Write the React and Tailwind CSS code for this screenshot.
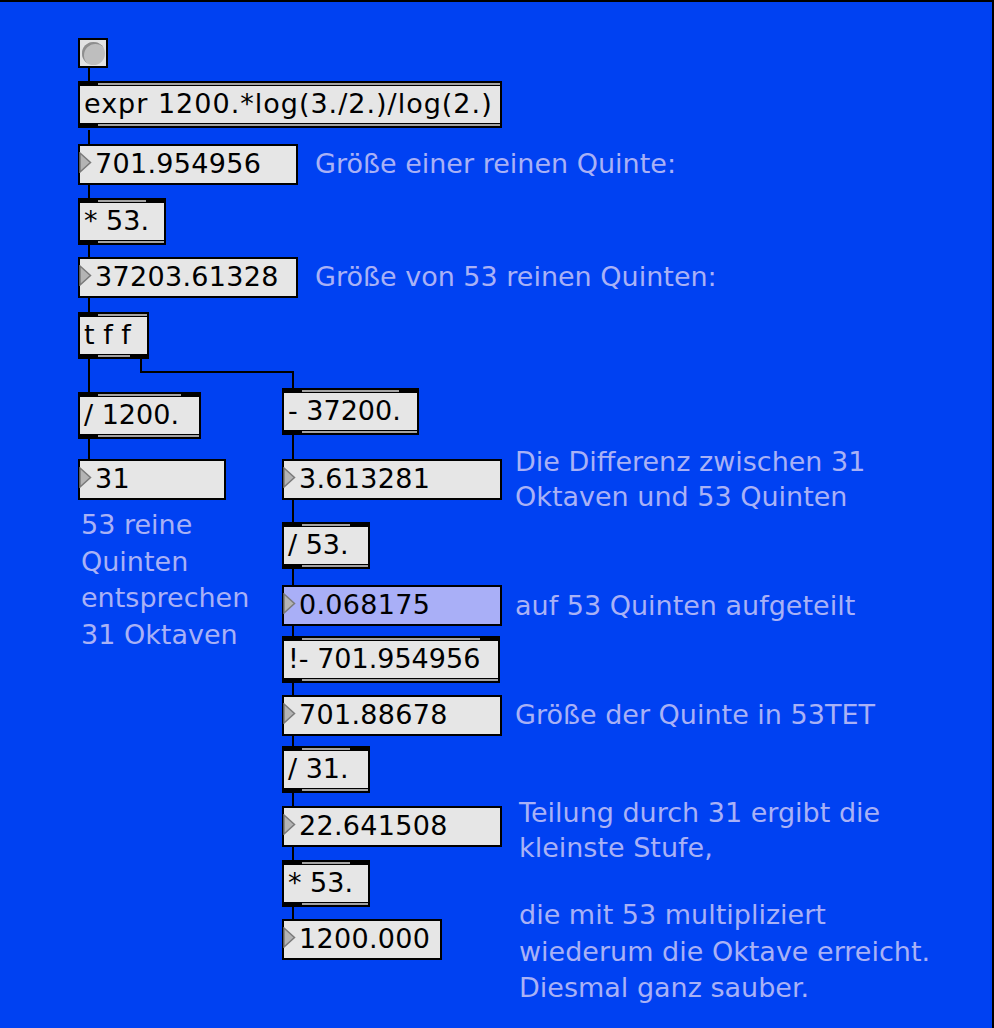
import React from 'react';

const FONT = { fontFamily: '"DejaVu Sans", Verdana, sans-serif' };

// Max-style object box: thick black top/bottom bands with grey inlet/outlet strips
const ObjectBox = ({ x, y, w, text, inlets = 1, outlets = 1, wide }) => (
    <div
        className="absolute flex flex-col bg-black h-[47px]"
        style={{ left: x, top: y, width: w }}
    >
        <div className="relative h-[5px] shrink-0">
            <div className={`absolute top-[2px] h-[2px] left-[20px] bg-[#a4a4a4] ${inlets > 1 ? 'right-[20px]' : 'right-[2px]'}`} />
        </div>
        <div className={`flex-1 mx-[2px] bg-[#e6e6e6] flex items-center pl-[4px] text-black text-[27px] whitespace-nowrap overflow-hidden ${wide ? 'tracking-[1px]' : ''}`}>
            {text}
        </div>
        <div className="relative h-[5px] shrink-0">
            <div className={`absolute top-[1px] h-[2px] left-[20px] bg-[#a4a4a4] ${outlets > 1 ? 'right-[19px]' : 'right-[2px]'}`} />
        </div>
    </div>
);

// number box with the little triangle on the left
const NumberBox = ({ x, y, w, value, active }) => (
    <div
        className={`absolute h-[41px] border-2 border-black flex items-center pl-[15px] text-black text-[27px] tracking-[0.3px] whitespace-nowrap ${active ? 'bg-[#a9aff7]' : 'bg-[#e6e6e6]'}`}
        style={{ left: x, top: y, width: w }}
    >
        <svg className="absolute left-[-1px] top-[6px]" width="13" height="21" viewBox="0 0 13 21">
            <polygon points="1,1 11.5,10.5 1,20" fill="#b4b4b4" stroke="#7a7a7a" strokeWidth="1.5" />
        </svg>
        {value}
    </div>
);

const Comment = ({ x, y, lines, leading = 'leading-[36px]' }) => (
    <div
        className={`absolute text-[27px] text-[#a9b1f6] whitespace-nowrap ${leading}`}
        style={{ left: x, top: y }}
    >
        {lines.map((l, i) => (
            <div key={i}>{l}</div>
        ))}
    </div>
);

const cords = [
    'M89 68 V82',
    'M89 130 V144',
    'M89 185 V198',
    'M89 245 V257',
    'M89 298 V312',
    'M89 359 V392',
    'M141 359 V372 H293 V388',
    'M89 439 V459',
    'M293 435 V459',
    'M293 499 V522',
    'M293 569 V585',
    'M293 626 V636',
    'M293 683 V695',
    'M293 736 V746',
    'M293 793 V806',
    'M293 847 V860',
    'M293 907 V919',
];

export default function App() {
    return (
        <div
            className="relative w-[994px] h-[1028px] bg-[#0041f2] overflow-hidden shadow-[inset_-2px_2px_0_#000]"
            style={FONT}
        >
            {/* patch cords */}
            <svg className="absolute inset-0" width="994" height="1028" shapeRendering="crispEdges">
                {cords.map((d, i) => (
                    <path key={i} d={d} stroke="#000" strokeWidth="2" fill="none" />
                ))}
            </svg>

            {/* bang */}
            <div className="absolute left-[78px] top-[38px] w-[30px] h-[30px] border-2 border-black bg-[#e2e2e2] flex items-center justify-center">
                <div className="w-[23px] h-[23px] rounded-full bg-[#bebebe] shadow-[inset_2px_2px_0_#8e8e8e]" />
            </div>

            <ObjectBox x={78} y={81} w={424} text="expr 1200.*log(3./2.)/log(2.)" wide />
            <NumberBox x={78} y={144} w={220} value="701.954956" />
            <Comment x={315} y={146} lines={['Größe einer reinen Quinte:']} />

            <ObjectBox x={78} y={198} w={88} text="* 53." inlets={2} />
            <NumberBox x={78} y={257} w={220} value="37203.61328" />
            <Comment x={315} y={259} lines={['Größe von 53 reinen Quinten:']} />

            <ObjectBox x={78} y={312} w={71} text="t f f" outlets={2} />

            {/* left branch */}
            <ObjectBox x={78} y={392} w={123} text="/ 1200." inlets={2} />
            <NumberBox x={78} y={459} w={148} value="31" />
            <Comment
                x={81}
                y={507}
                leading="leading-[36.5px]"
                lines={['53 reine', 'Quinten', 'entsprechen', '31 Oktaven']}
            />

            {/* right branch */}
            <ObjectBox x={282} y={388} w={137} text="- 37200." inlets={2} />
            <NumberBox x={282} y={459} w={220} value="3.613281" />
            <Comment
                x={515}
                y={444}
                leading="leading-[35px]"
                lines={['Die Differenz zwischen 31', 'Oktaven und 53 Quinten']}
            />

            <ObjectBox x={282} y={522} w={88} text="/ 53." inlets={2} />
            <NumberBox x={282} y={585} w={220} value="0.068175" active />
            <Comment x={515} y={588} lines={['auf 53 Quinten aufgeteilt']} />

            <ObjectBox x={282} y={636} w={218} text="!- 701.954956" inlets={2} />
            <NumberBox x={282} y={695} w={220} value="701.88678" />
            <Comment x={515} y={697} lines={['Größe der Quinte in 53TET']} />

            <ObjectBox x={282} y={746} w={88} text="/ 31." inlets={2} />
            <NumberBox x={282} y={806} w={220} value="22.641508" />
            <Comment
                x={519}
                y={795}
                leading="leading-[35px]"
                lines={['Teilung durch 31 ergibt die', 'kleinste Stufe,']}
            />

            <ObjectBox x={282} y={860} w={88} text="* 53." inlets={2} />
            <NumberBox x={282} y={919} w={160} value="1200.000" />
            <Comment
                x={519}
                y={897}
                leading="leading-[36.5px]"
                lines={['die mit 53 multipliziert', 'wiederum die Oktave erreicht.', 'Diesmal ganz sauber.']}
            />
        </div>
    );
}
